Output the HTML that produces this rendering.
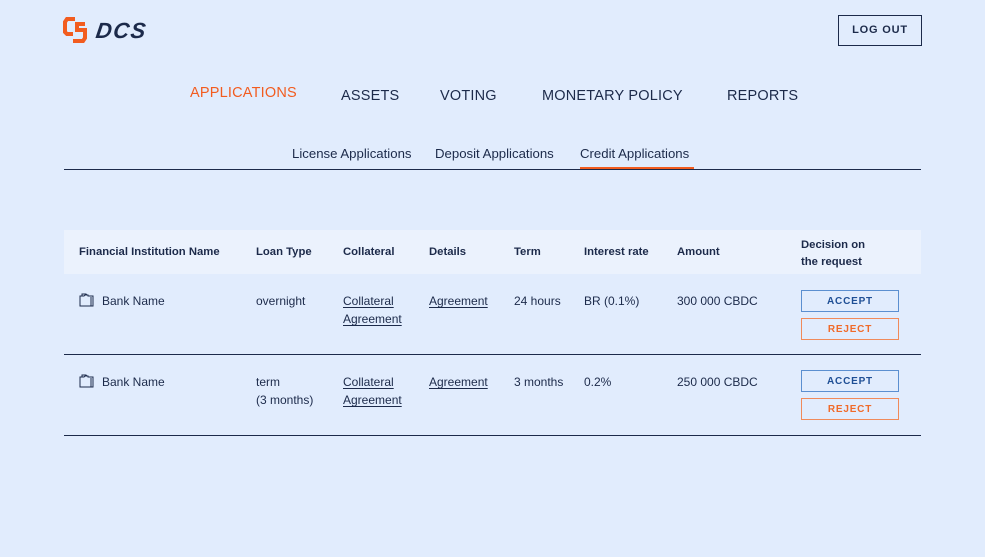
<!DOCTYPE html>
<html><head><meta charset="utf-8"><style>
*{margin:0;padding:0;box-sizing:border-box}
body{width:985px;height:557px;background:#e1ecfd;font-family:"Liberation Sans",sans-serif;color:#1c2a4a;position:relative;overflow:hidden}
.a{position:absolute;white-space:nowrap}
.nav{font-size:14.5px;top:88px;color:#1c2a4a;letter-spacing:.2px}
.sub{font-size:13.2px;top:146px}
.th{font-size:11.3px;font-weight:bold;color:#1c2a4a}
.td{font-size:12px;color:#1c2a4a;line-height:18px}
u{text-underline-offset:2px}
.btn{position:absolute;width:98px;height:22px;border:1.5px solid;font-size:10px;font-weight:bold;text-align:center;line-height:19px;padding-top:1px;letter-spacing:.8px}
.acc{border-color:#5b8fd0;color:#1f4f95}
.rej{border-color:#f08a5a;color:#f06a2a}
</style></head><body>
<svg class="a" style="left:63px;top:17px" width="30" height="27" viewBox="0 0 30 27">
<path d="M12 2H4L2 5v10l2 2h6" fill="none" stroke="#f25c1f" stroke-width="4"/>
<path d="M22 7h-8v6h8v8l-2 3H10" fill="none" stroke="#f25c1f" stroke-width="4"/>
</svg>
<div class="a" style="left:96px;top:18px;font-size:22px;font-weight:bold;font-style:italic;color:#1c2a4a;letter-spacing:1.5px;transform:skewX(-8deg)">DCS</div>
<div class="a" style="left:838px;top:15px;width:84px;height:31px;border:1.5px solid #1c2a4a;font-size:11px;font-weight:bold;text-align:center;line-height:28px;letter-spacing:.8px">LOG OUT</div>
<div class="a nav" style="left:190px;top:85px;color:#f25c1f">APPLICATIONS</div>
<div class="a nav" style="left:341px">ASSETS</div>
<div class="a nav" style="left:440px">VOTING</div>
<div class="a nav" style="left:542px">MONETARY POLICY</div>
<div class="a nav" style="left:727px">REPORTS</div>
<div class="a sub" style="left:292px">License Applications</div>
<div class="a sub" style="left:435px">Deposit Applications</div>
<div class="a sub" style="left:580px">Credit Applications</div>
<div class="a" style="left:580px;top:167px;width:114px;height:2px;background:#f25c1f"></div>
<div class="a" style="left:64px;top:169px;width:857px;height:1px;background:#1c2a4a"></div>
<div class="a" style="left:64px;top:230px;width:857px;height:44px;background:#ebf2fd"></div>
<div class="a th" style="left:79px;top:246px">Financial Institution Name</div>
<div class="a th" style="left:256px;top:246px">Loan Type</div>
<div class="a th" style="left:343px;top:246px">Collateral</div>
<div class="a th" style="left:429px;top:246px">Details</div>
<div class="a th" style="left:514px;top:246px">Term</div>
<div class="a th" style="left:584px;top:246px">Interest rate</div>
<div class="a th" style="left:677px;top:246px">Amount</div>
<div class="a th" style="left:801px;top:237px;line-height:17px">Decision on<br>the request</div>

<svg class="a" style="left:79px;top:293px" width="16" height="14" viewBox="0 0 16 14"><path d="M1 3h4l1-1h3v1h5v10H1z M3 3V1h4l1 1" fill="none" stroke="#1c2a4a" stroke-width="1"/><path d="M12 4v9" stroke="#1c2a4a"/></svg>
<div class="a td" style="left:102px;top:292px">Bank Name</div>
<div class="a td" style="left:256px;top:292px">overnight</div>
<div class="a td" style="left:343px;top:292px"><u>Collateral</u><br><u>Agreement</u></div>
<div class="a td" style="left:429px;top:292px"><u>Agreement</u></div>
<div class="a td" style="left:514px;top:292px">24 hours</div>
<div class="a td" style="left:584px;top:292px">BR (0.1%)</div>
<div class="a td" style="left:677px;top:292px">300 000 CBDC</div>
<div class="btn acc" style="left:801px;top:290px">ACCEPT</div>
<div class="btn rej" style="left:801px;top:318px">REJECT</div>
<div class="a" style="left:64px;top:354px;width:857px;height:1px;background:#1c2a4a"></div>

<svg class="a" style="left:79px;top:374px" width="16" height="14" viewBox="0 0 16 14"><path d="M1 3h4l1-1h3v1h5v10H1z M3 3V1h4l1 1" fill="none" stroke="#1c2a4a" stroke-width="1"/><path d="M12 4v9" stroke="#1c2a4a"/></svg>
<div class="a td" style="left:102px;top:373px">Bank Name</div>
<div class="a td" style="left:256px;top:373px">term<br>(3 months)</div>
<div class="a td" style="left:343px;top:373px"><u>Collateral</u><br><u>Agreement</u></div>
<div class="a td" style="left:429px;top:373px"><u>Agreement</u></div>
<div class="a td" style="left:514px;top:373px">3 months</div>
<div class="a td" style="left:584px;top:373px">0.2%</div>
<div class="a td" style="left:677px;top:373px">250 000 CBDC</div>
<div class="btn acc" style="left:801px;top:370px">ACCEPT</div>
<div class="btn rej" style="left:801px;top:398px">REJECT</div>
<div class="a" style="left:64px;top:435px;width:857px;height:1px;background:#1c2a4a"></div>
</body></html>
